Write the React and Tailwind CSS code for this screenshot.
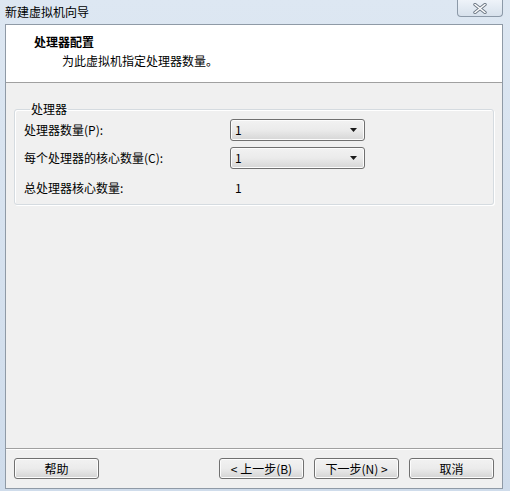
import React from "react";

const font = { fontFamily: "'Noto Sans CJK SC', 'Liberation Sans', sans-serif" };

const btn =
  "w-[85px] h-[21px] rounded-[3px] border border-[#707070] bg-gradient-to-b from-[#f2f2f2] via-[#ebebeb] to-[#d4d4d4] text-[12px] text-black flex items-center justify-center leading-none shadow-[inset_0_0_0_1px_#fcfcfc]";

function Combo({ value }) {
  return (
    <div className="w-[135px] h-[22px] rounded-[3px] border border-[#707070] bg-gradient-to-b from-[#f2f2f2] via-[#ebebeb] to-[#d6d6d6] shadow-[inset_0_0_0_1px_#fcfcfc] flex items-center justify-between pl-[4px] pr-[6px] text-[12px]">
      <span>{value}</span>
      <svg width="8" height="5" viewBox="0 0 8 5">
        <path d="M0 0 H7 L3.5 4 Z" fill="#1a1a1a" />
      </svg>
    </div>
  );
}

export default function App() {
  return (
    <div
      className="w-[510px] h-[491px] flex flex-col bg-gradient-to-b from-[#dde7f2] to-[#cfdceb] text-black overflow-hidden"
      style={font}
    >
      {/* Title bar */}
      <div className="relative h-[24px] shrink-0 flex items-center pl-[5px] text-[12px]">
        <span>新建虚拟机向导</span>
        <div className="absolute right-[7px] top-0 w-[46px] h-[17px] rounded-b-[4px] border border-t-0 border-[#8c99a8] bg-gradient-to-b from-[#eef3f9] to-[#d7e1ec] flex items-center justify-center">
          <svg width="14" height="11" viewBox="0 0 14 11">
            <path d="M2 1.5 L12 9.5 M12 1.5 L2 9.5" stroke="#6d7885" strokeWidth="3.4" strokeLinecap="round" />
            <path d="M2 1.5 L12 9.5 M12 1.5 L2 9.5" stroke="#ffffff" strokeWidth="1.6" strokeLinecap="round" />
          </svg>
        </div>
      </div>

      {/* Client area */}
      <div className="ml-[5px] mr-[7px] mb-[2px] flex-1 flex flex-col bg-[#f0f0f0] border border-[#8f9aa6]">
        {/* Header */}
        <div className="h-[58px] shrink-0 bg-white border-b border-[#a0a0a0] flex flex-col">
          <div className="pl-[28px] pt-[8px] text-[12px] font-bold leading-[18px]">处理器配置</div>
          <div className="pl-[56px] pt-[1px] text-[12px] leading-[18px]">为此虚拟机指定处理器数量。</div>
        </div>

        {/* Body */}
        <div className="flex-1 px-[8px] pt-[19px]">
          <fieldset className="border border-[#d5dbe0] rounded-[3px] shadow-[inset_1px_1px_0_#ffffff,1px_1px_0_#ffffff] pl-[9px] pb-[5px]">
            <legend className="ml-[6px] px-[1px] text-[12px] leading-[14px]">处理器</legend>
            <div className="flex flex-col text-[12px] mt-[3px]">
              <div className="h-[22px] flex items-center">
                <span className="w-[206px]">处理器数量(P):</span>
                <Combo value="1" />
              </div>
              <div className="h-[22px] mt-[6px] flex items-center">
                <span className="w-[206px]">每个处理器的核心数量(C):</span>
                <Combo value="1" />
              </div>
              <div className="h-[22px] mt-[8px] flex items-center">
                <span className="w-[211px]">总处理器核心数量:</span>
                <span>1</span>
              </div>
            </div>
          </fieldset>
        </div>

        {/* Footer */}
        <div className="h-[40px] shrink-0 border-t border-[#a0a0a0] shadow-[inset_0_1px_0_#ffffff] flex items-start pt-[9px] pl-[8px] pr-[8px]">
          <button className={btn}>帮助</button>
          <div className="flex-1" />
          <button className={btn}>&lt; 上一步(B)</button>
          <button className={btn + " ml-[10px]"}>下一步(N) &gt;</button>
          <button className={btn + " ml-[10px]"}>取消</button>
        </div>
      </div>
    </div>
  );
}
